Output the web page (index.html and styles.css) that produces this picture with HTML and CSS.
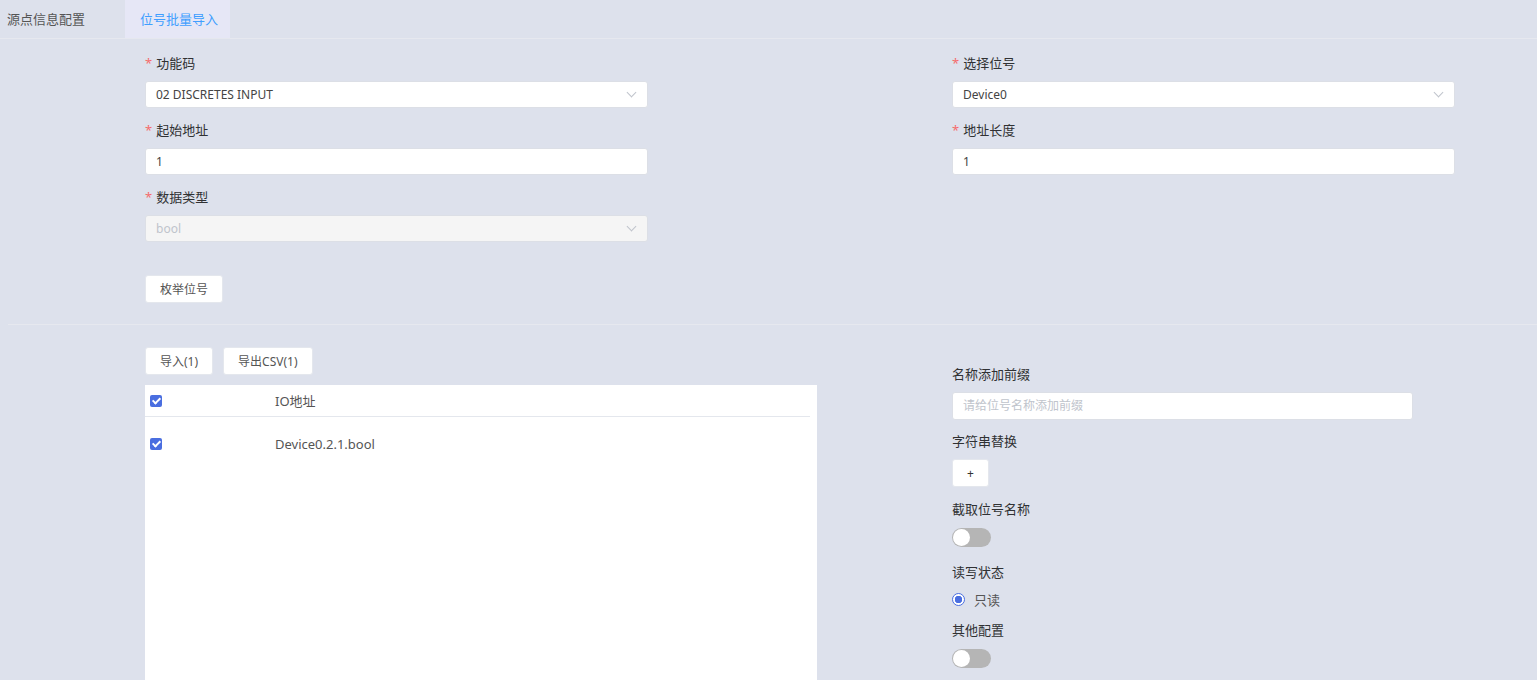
FILE: index.html
```html
<!DOCTYPE html>
<html>
  <head>
    <title>位号批量导入</title>
    <link rel="stylesheet" href="styles.css">
  </head>
  <body>
    <div class="tabs">
      <div class="tab">源点信息配置</div>
      <div class="tab active">位号批量导入</div>
    </div>

    <div class="form-top">
      <div class="col">
        <div class="field">
          <label class="label required">功能码</label>
          <div class="select">02 DISCRETES INPUT<span class="arrow"></span></div>
        </div>
        <div class="field">
          <label class="label required">起始地址</label>
          <div class="input">1</div>
        </div>
        <div class="field">
          <label class="label required">数据类型</label>
          <div class="select disabled">bool<span class="arrow"></span></div>
        </div>
        <button class="btn enum-btn">枚举位号</button>
      </div>
      <div class="col">
        <div class="field">
          <label class="label required">选择位号</label>
          <div class="select">Device0<span class="arrow"></span></div>
        </div>
        <div class="field">
          <label class="label required">地址长度</label>
          <div class="input">1</div>
        </div>
      </div>
    </div>

    <div class="divider"></div>

    <div class="form-bottom">
      <div class="left">
        <div class="toolbar">
          <button class="btn">导入(1)</button>
          <button class="btn">导出CSV(1)</button>
        </div>
        <div class="table">
          <div class="row head">
            <span class="check"></span>
            <span class="cell">IO地址</span>
          </div>
          <div class="row">
            <span class="check"></span>
            <span class="cell">Device0.2.1.bool</span>
          </div>
        </div>
      </div>
      <div class="right">
        <div class="item">
          <label class="label">名称添加前缀</label>
          <div class="input placeholder">请给位号名称添加前缀</div>
        </div>
        <div class="item plus-item">
          <label class="label">字符串替换</label>
          <button class="btn plus">+</button>
        </div>
        <div class="item switch-item">
          <label class="label">截取位号名称</label>
          <span class="switch"></span>
        </div>
        <div class="item">
          <label class="label">读写状态</label>
          <div class="radio"><span class="dot"></span>只读</div>
        </div>
        <div class="item switch-item">
          <label class="label">其他配置</label>
          <span class="switch"></span>
        </div>
      </div>
    </div>
  </body>
</html>
```

FILE: styles.css
```css
body {
  margin: 0;
  background-color: #dde1ec;
  font-family: "Noto Sans", "Noto Sans CJK SC", sans-serif;
  font-size: 13px;
  color: #303133;
  overflow: hidden;
}
.tabs {
  display: flex;
  height: 38px;
  border-bottom: 1px solid #e6e8ef;
}
.tab {
  box-sizing: border-box;
  width: 125px;
  padding: 0 7px;
  line-height: 38px;
  white-space: nowrap;
  color: #555;
}
.tab.active {
  width: 105px;
  padding: 0 15px;
  background-color: #e6e7f6;
  color: #409eff;
}
.form-top {
  display: flex;
  gap: 304px;
  padding: 14px 0 0 145px;
}
.col {
  width: 503px;
}
.field {
  height: 67px;
}
.label {
  display: block;
  line-height: 20px;
  margin-bottom: 8px;
}
.label.required::before {
  content: "*";
  color: #f56c6c;
  margin-right: 4px;
}
.select,
.input {
  position: relative;
  box-sizing: border-box;
  height: 27px;
  line-height: 25px;
  padding: 0 10px;
  background-color: #fff;
  border: 1px solid #dcdfe6;
  border-radius: 3px;
  color: #444;
  font-size: 12px;
}
.select.disabled {
  background-color: #f5f5f5;
  color: #c0c4cc;
}
.arrow {
  position: absolute;
  right: 12px;
  top: 7px;
  width: 6px;
  height: 6px;
  border-right: 1px solid #c0c4cc;
  border-bottom: 1px solid #c0c4cc;
  transform: rotate(45deg);
}
.btn {
  box-sizing: border-box;
  height: 28px;
  padding: 0 14px;
  background-color: #fff;
  border: 1px solid #e4e7ed;
  border-radius: 3px;
  font-family: inherit;
  font-size: 12px;
  color: #555;
}
.enum-btn {
  margin-top: 21px;
}
.divider {
  margin: 21px 0 0 8px;
  border-top: 1px solid #e6e8ef;
}
.form-bottom {
  display: flex;
  padding: 22px 0 0 145px;
}
.left {
  width: 672px;
}
.toolbar {
  display: flex;
  gap: 10px;
  margin-bottom: 10px;
}
.table {
  background-color: #fff;
  height: 300px;
  padding-right: 7px;
}
.row {
  display: flex;
  align-items: center;
  height: 31px;
}
.row.head {
  border-bottom: 1px solid #e4e7ed;
  color: #555;
}
.row + .row {
  height: 53px;
}
.check {
  position: relative;
  width: 12px;
  height: 12px;
  margin-left: 5px;
  background-color: #4a6ee0;
  border-radius: 2px;
}
.check::after {
  content: "";
  position: absolute;
  left: 4px;
  top: 1px;
  width: 3px;
  height: 6px;
  border-right: 2px solid #fff;
  border-bottom: 2px solid #fff;
  transform: rotate(45deg);
}
.cell {
  margin-left: 113px;
  color: #555;
}
.right {
  margin-left: 135px;
  padding-top: 17px;
  width: 461px;
}
.item {
  margin-bottom: 11px;
}
.plus-item {
  margin-bottom: 12px;
}
.switch-item {
  margin-bottom: 15px;
}
.placeholder {
  color: #c0c4cc;
  height: 28px;
  line-height: 26px;
}
.plus {
  width: 37px;
  padding: 0;
  color: #333;
}
.switch {
  display: block;
  position: relative;
  width: 39px;
  height: 19px;
  margin-top: 9px;
  border-radius: 10px;
  background-color: #b5b5b5;
}
.switch::after {
  content: "";
  position: absolute;
  left: 1px;
  top: 1px;
  width: 17px;
  height: 17px;
  border-radius: 50%;
  background-color: #fff;
}
.radio {
  display: flex;
  align-items: center;
  gap: 9px;
  margin-top: 6px;
  color: #555;
}
.dot {
  box-sizing: border-box;
  width: 13px;
  height: 13px;
  border-radius: 50%;
  border: 1px solid #4a6ee0;
  background: radial-gradient(circle, #4a6ee0 0 3.5px, #fff 4px);
}
```
